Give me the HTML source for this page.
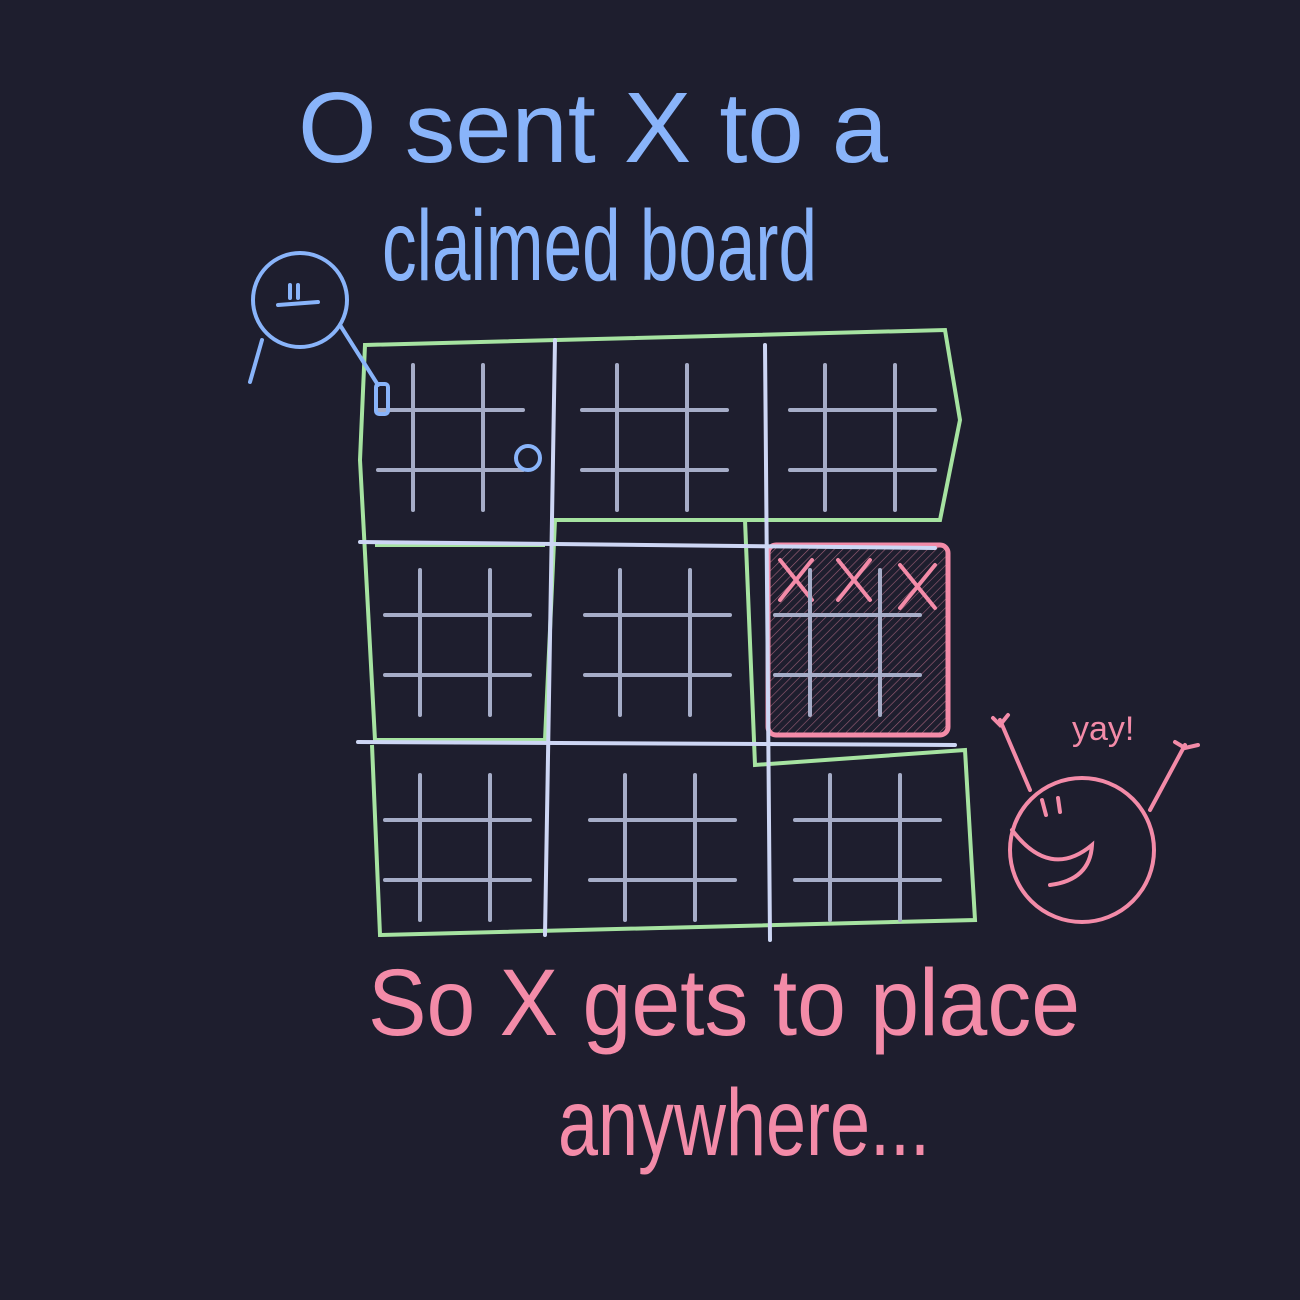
<!DOCTYPE html>
<html><head><meta charset="utf-8"><style>
html,body{margin:0;padding:0;background:#1e1e2e;}
svg{display:block}
text{font-family:"Liberation Sans",sans-serif;}
</style></head><body>
<svg width="1300" height="1300" viewBox="0 0 1300 1300" xmlns="http://www.w3.org/2000/svg">
<rect width="1300" height="1300" fill="#1e1e2e"/>
<defs>
<pattern id="hatch" width="6" height="6" patternUnits="userSpaceOnUse" patternTransform="rotate(45)">
<line x1="0" y1="0" x2="0" y2="6" stroke="#f38ba8" stroke-width="1.2" opacity="0.6"/>
</pattern>
<g id="sub" stroke="#a6adc8" stroke-width="4" fill="none" stroke-linecap="round">
<line x1="55" y1="20" x2="55" y2="165"/><line x1="125" y1="20" x2="125" y2="165"/>
<line x1="20" y1="65" x2="165" y2="65"/><line x1="20" y1="125" x2="165" y2="125"/>
</g>
</defs>
<g font-size="100" fill="#89b4fa" font-weight="normal">
<text x="298" y="162" textLength="590" lengthAdjust="spacingAndGlyphs">O sent X to a</text>
<text x="382" y="280" textLength="435" lengthAdjust="spacingAndGlyphs">claimed board</text>
</g>
<g fill="#f38ba8">
<text x="368" y="1035" font-size="95" textLength="712" lengthAdjust="spacingAndGlyphs">So X gets to place</text>
<text x="558" y="1155" font-size="95" textLength="372" lengthAdjust="spacingAndGlyphs">anywhere...</text>
<text x="1072" y="740" font-size="34">yay!</text>
</g>
<!-- green board outlines -->
<g stroke="#a6e3a1" stroke-width="4" fill="none">
<path d="M365 345 L945 330 L960 420 L940 520 L555 520 L545 740 L375 740 L360 460 Z"/>
<path d="M745 520 L755 765 L965 750 L975 920 L380 935 L372 745"/>
<path d="M375 545 L545 545"/>
</g>
<!-- pink claimed board -->
<rect x="768" y="545" width="180" height="190" rx="8" fill="url(#hatch)" stroke="#f38ba8" stroke-width="5"/>
<g stroke="#f38ba8" stroke-width="4" stroke-linecap="round">
<line x1="780" y1="560" x2="812" y2="600"/><line x1="812" y1="560" x2="780" y2="600"/>
<line x1="838" y1="560" x2="870" y2="600"/><line x1="870" y1="560" x2="838" y2="600"/>
<line x1="900" y1="565" x2="935" y2="608"/><line x1="935" y1="565" x2="900" y2="608"/>
</g>
<!-- sub boards -->
<use href="#sub" x="358" y="345"/><use href="#sub" x="562" y="345"/><use href="#sub" x="770" y="345"/>
<use href="#sub" x="365" y="550"/><use href="#sub" x="565" y="550"/><use href="#sub" x="755" y="550"/>
<use href="#sub" x="365" y="755"/><use href="#sub" x="570" y="755"/><use href="#sub" x="775" y="755"/>
<!-- main grid -->
<g stroke="#cdd6f4" stroke-width="4" stroke-linecap="round">
<line x1="555" y1="340" x2="545" y2="935"/><line x1="765" y1="345" x2="770" y2="940"/>
<line x1="360" y1="542" x2="935" y2="548"/><line x1="358" y1="742" x2="955" y2="745"/>
</g>
<!-- blue O player -->
<g stroke="#89b4fa" stroke-width="4" fill="none" stroke-linecap="round">
<circle cx="300" cy="300" r="47"/>
<line x1="278" y1="305" x2="318" y2="302"/><line x1="290" y1="285" x2="290" y2="298"/><line x1="298" y1="285" x2="298" y2="298"/>
<path d="M262 340 L250 382"/><path d="M340 325 L378 385"/>
<rect x="376" y="384" width="12" height="30" rx="3"/>
<circle cx="528" cy="458" r="12"/>
</g>
<!-- pink X player -->
<g stroke="#f38ba8" stroke-width="4" fill="none" stroke-linecap="round">
<circle cx="1082" cy="850" r="72"/>
<path d="M1012 830 Q1050 880 1092 845 Q1090 880 1050 885"/>
<line x1="1042" y1="800" x2="1046" y2="815"/><line x1="1058" y1="798" x2="1060" y2="812"/>
<path d="M1030 790 L1000 720"/><path d="M993 718 L1000 725 L1008 715"/>
<path d="M1150 810 L1185 745"/><path d="M1175 742 L1185 748 L1198 745"/>
</g>
</svg>
</body></html>
